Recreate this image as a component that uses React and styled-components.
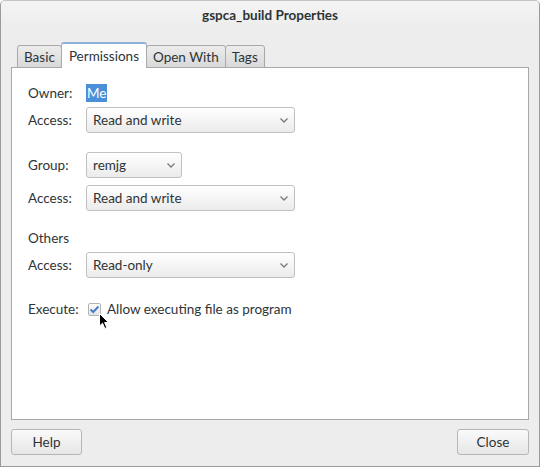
import React from "react";
import styled, { createGlobalStyle } from "styled-components";

const Global = createGlobalStyle`
  html, body { margin: 0; padding: 0; background: #ffffff; }
  body { font-family: Lato, "Open Sans", sans-serif; font-size: 13.5px; color: #2e3436; }
  * { box-sizing: border-box; }
`;

const Window = styled.div`
  width: 540px;
  height: 467px;
  background: #ededed;
  border: 1px solid #9a9a9a;
  border-top-color: #c4c4c4;
  border-radius: 5px 5px 0 0;
  display: flex;
  flex-direction: column;
  position: relative;
  overflow: hidden;
`;

const TitleBar = styled.div`
  height: 27px;
  display: flex;
  align-items: center;
  justify-content: center;
  font-weight: bold;
  font-size: 13.5px;
  color: #2e3436;
  background: linear-gradient(#f4f4f4, #ededed);
`;

const Body = styled.div`
  flex: 1;
  display: flex;
  flex-direction: column;
  padding: 14px 10px 11px 10px;
`;

const TabStrip = styled.div`
  display: flex;
  align-items: flex-end;
  height: 26px;
  padding-left: 7px;
  position: relative;
  z-index: 1;
  margin-bottom: -1px;
`;

const Tab = styled.div`
  height: ${(p) => (p.$active ? "26px" : "23px")};
  padding: 0 ${(p) => (p.$active ? "7px" : "6px")};
  display: flex;
  align-items: center;
  justify-content: center;
  border: 1px solid #a9a9a9;
  border-bottom: ${(p) => (p.$active ? "none" : "1px solid #a9a9a9")};
  border-top: ${(p) => (p.$active ? "2px solid #8fb1d9" : "1px solid #a9a9a9")};
  border-radius: 3px 3px 0 0;
  margin-left: -1px;
  background: ${(p) =>
    p.$active ? "#ffffff" : "linear-gradient(#ececec, #d9d9d9)"};
  color: #2e3436;
  padding-top: ${(p) => (p.$active ? "0" : "1px")};
`;

const Panel = styled.div`
  flex: 1;
  background: #ffffff;
  border: 1px solid #a8a8a8;
  padding: 16px 16px;
  display: flex;
  flex-direction: column;
`;

const Row = styled.div`
  display: flex;
  align-items: center;
  height: ${(p) => p.$h || 18}px;
  margin-top: ${(p) => p.$mt || 0}px;
`;

const Label = styled.div`
  width: 58px;
  flex: none;
`;

const Selected = styled.span`
  background: #4a90d9;
  color: #ffffff;
  height: 18px;
  line-height: 18px;
  padding: 0 1px;
`;

const Combo = styled.div`
  width: ${(p) => p.$w}px;
  height: 26px;
  border: 1px solid #c0c0c0;
  border-radius: 3px;
  background: linear-gradient(#ffffff, #ebebeb);
  box-shadow: 0 1px 0 rgba(255, 255, 255, 0.8);
  display: flex;
  align-items: center;
  justify-content: space-between;
  padding: 0 5px 0 6px;
`;

const Chevron = () => (
  <svg width="10" height="7" viewBox="0 0 10 7">
    <path d="M1.5 1.5 L5 5 L8.5 1.5" fill="none" stroke="#7a7a7a" strokeWidth="1.3" />
  </svg>
);

const Check = styled.div`
  width: 13px;
  height: 13px;
  border: 1px solid #b4b4b4;
  border-radius: 2px;
  background: linear-gradient(#ffffff, #e4e4e4);
  display: flex;
  align-items: center;
  justify-content: center;
  margin: 0 6px 0 2px;
  flex: none;
`;

const ButtonRow = styled.div`
  display: flex;
  justify-content: space-between;
  margin-top: 9px;
`;

const Button = styled.div`
  width: ${(p) => p.$w}px;
  height: 26px;
  border: 1px solid #b6b6b6;
  border-radius: 3px;
  background: linear-gradient(#fafafa, #e6e6e6);
  display: flex;
  align-items: center;
  justify-content: center;
  color: #2e3436;
`;

const Cursor = styled.svg`
  position: absolute;
  left: 98px;
  top: 312px;
`;

export default function App() {
  return (
    <>
      <Global />
      <Window>
        <TitleBar>gspca_build Properties</TitleBar>
        <Body>
          <TabStrip>
            <Tab>Basic</Tab>
            <Tab $active>Permissions</Tab>
            <Tab>Open With</Tab>
            <Tab>Tags</Tab>
          </TabStrip>
          <Panel>
            <Row $h={18}>
              <Label>Owner:</Label>
              <Selected>Me</Selected>
            </Row>
            <Row $h={26} $mt={5}>
              <Label>Access:</Label>
              <Combo $w={209}>
                Read and write
                <Chevron />
              </Combo>
            </Row>
            <Row $h={26} $mt={19}>
              <Label>Group:</Label>
              <Combo $w={96}>
                remjg
                <Chevron />
              </Combo>
            </Row>
            <Row $h={26} $mt={7}>
              <Label>Access:</Label>
              <Combo $w={209}>
                Read and write
                <Chevron />
              </Combo>
            </Row>
            <Row $h={18} $mt={18}>
              <Label>Others</Label>
            </Row>
            <Row $h={26} $mt={5}>
              <Label>Access:</Label>
              <Combo $w={209}>
                Read-only
                <Chevron />
              </Combo>
            </Row>
            <Row $h={18} $mt={22}>
              <Label>Execute:</Label>
              <Check>
                <svg width="11" height="9" viewBox="0 0 11 9">
                  <path d="M1.5 4.5 L4.2 7 L9.5 1.5" fill="none" stroke="#4a7fc1" strokeWidth="2" />
                </svg>
              </Check>
              Allow executing file as program
            </Row>
          </Panel>
          <ButtonRow>
            <Button $w={71}>Help</Button>
            <Button $w={72}>Close</Button>
          </ButtonRow>
        </Body>
        <Cursor width="11" height="17" viewBox="0 0 11 17">
          <path d="M0.5 0.5 L0.5 13 L3.5 10.2 L5.8 15.5 L7.8 14.6 L5.6 9.5 L9.5 9.5 Z" fill="#000" stroke="#fff" strokeWidth="1" />
        </Cursor>
      </Window>
    </>
  );
}
